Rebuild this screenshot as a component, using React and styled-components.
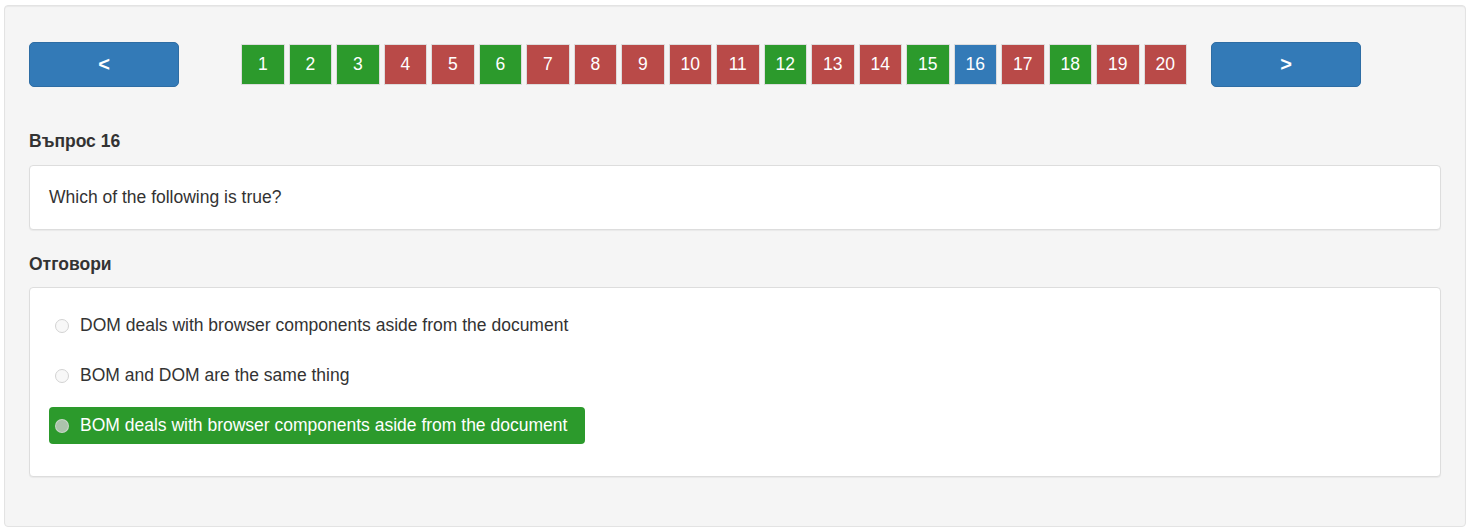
import React, { useState } from 'react';
import styled, { createGlobalStyle } from 'styled-components';

const GlobalStyle = createGlobalStyle`
  html, body {
    margin: 0;
    padding: 0;
    background: #fff;
    font-family: "Liberation Sans", Arial, Helvetica, sans-serif;
    color: #333;
  }
`;

const Well = styled.div`
  margin: 5px 7px 5px 4px;
  box-sizing: border-box;
  padding: 36px 24px 49px 24px;
  background: #f5f5f5;
  border: 1px solid #e3e3e3;
  border-radius: 4px;
  box-shadow: inset 0 1px 1px rgba(0, 0, 0, 0.05);
`;

const NavRow = styled.div`
  display: flex;
  align-items: center;
  height: 45px;
`;

const ArrowButton = styled.button`
  width: 150px;
  height: 45px;
  border: 1px solid #2e6da4;
  border-radius: 5px;
  background: #337ab7;
  color: #fff;
  font-family: inherit;
  font-size: 20px;
  font-weight: bold;
  cursor: pointer;
  padding: 0;
  margin-left: ${p => p.$ml || 0}px;
`;

const Pager = styled.div`
  display: flex;
  gap: 4px;
  margin-left: 62px;
`;

const colors = {
  ok: '#2c9a2c',
  bad: '#b94a48',
  current: '#337ab7',
};

const PageBox = styled.div`
  width: 43.5px;
  height: 41px;
  box-sizing: border-box;
  border: 1px solid #ddd;
  background: ${p => colors[p.$state]};
  color: #fff;
  font-size: 17.5px;
  display: flex;
  align-items: center;
  justify-content: center;
  cursor: pointer;
`;

const Heading = styled.div`
  font-size: 17.5px;
  font-weight: bold;
  line-height: 22px;
  margin-top: ${p => p.$mt}px;
  margin-bottom: ${p => p.$mb}px;
`;

const Card = styled.div`
  background: #fff;
  border: 1px solid #ddd;
  border-radius: 4px;
  box-shadow: 0 1px 1px rgba(0, 0, 0, 0.05);
`;

const QuestionCard = styled(Card)`
  padding: 20px 19px;
  font-size: 17.5px;
  line-height: 23px;
`;

const AnswersCard = styled(Card)`
  padding: 19px 19px 19px 19px;
`;

const Answer = styled.label`
  display: flex;
  width: fit-content;
  align-items: center;
  height: 37px;
  box-sizing: border-box;
  padding: 0 18px 0 6px;
  margin-bottom: 13px;
  border-radius: 4px;
  font-size: 17.5px;
  cursor: pointer;
  background: ${p => (p.$selected ? '#2c9a2c' : 'transparent')};
  color: ${p => (p.$selected ? '#fff' : '#333')};
`;

const Radio = styled.span`
  width: 14px;
  height: 14px;
  box-sizing: border-box;
  border-radius: 50%;
  margin-right: 11px;
  flex: none;
  border: 1px solid ${p => (p.$selected ? 'rgba(255,255,255,0.35)' : '#d3d3d3')};
  background: ${p => (p.$selected ? 'rgba(205,205,205,0.8)' : '#f8f8f8')};
`;

const pages = [
  'ok', 'ok', 'ok', 'bad', 'bad', 'ok', 'bad', 'bad', 'bad', 'bad',
  'bad', 'ok', 'bad', 'bad', 'ok', 'current', 'bad', 'ok', 'bad', 'bad',
];

const answers = [
  'DOM deals with browser components aside from the document',
  'BOM and DOM are the same thing',
  'BOM deals with browser components aside from the document',
];

export default function App() {
  const [selected, setSelected] = useState(2);

  return (
    <>
      <GlobalStyle />
      <Well>
        <NavRow>
          <ArrowButton>&lt;</ArrowButton>
          <Pager>
            {pages.map((state, i) => (
              <PageBox key={i} $state={state}>
                {i + 1}
              </PageBox>
            ))}
          </Pager>
          <ArrowButton $ml={24}>&gt;</ArrowButton>
        </NavRow>

        <Heading $mt={43} $mb={13}>Въпрос 16</Heading>
        <QuestionCard>Which of the following is true?</QuestionCard>

        <Heading $mt={23} $mb={12}>Отговори</Heading>
        <AnswersCard>
          {answers.map((text, i) => (
            <Answer key={i} $selected={selected === i} onClick={() => setSelected(i)}>
              <Radio $selected={selected === i} />
              {text}
            </Answer>
          ))}
        </AnswersCard>
      </Well>
    </>
  );
}
